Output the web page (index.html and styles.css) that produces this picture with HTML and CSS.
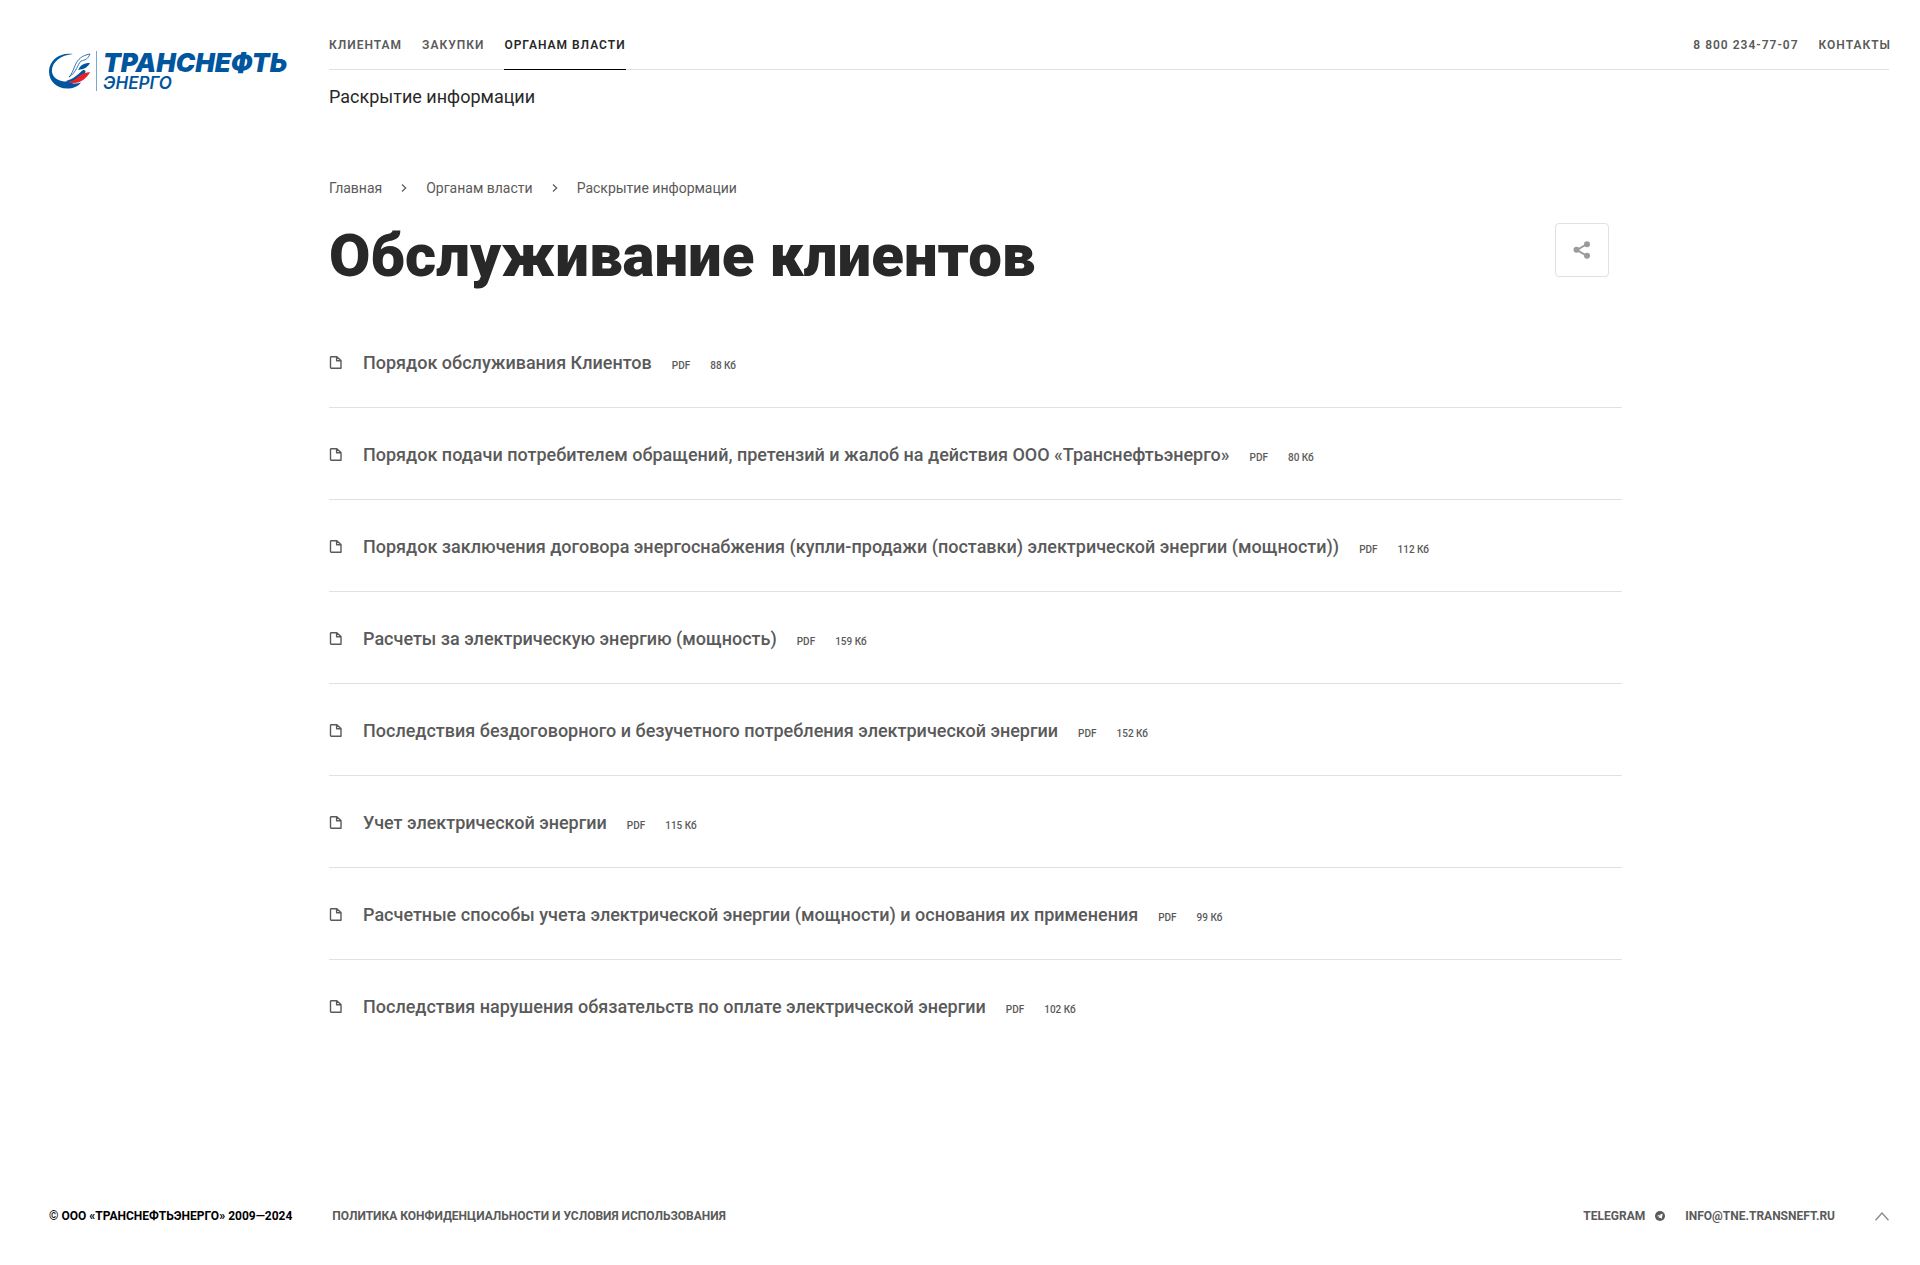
FILE: index.html
```html
<!DOCTYPE html>
<html lang="ru">
<head>
    <meta charset="UTF-8">
    <meta name="viewport" content="width=device-width, initial-scale=1.0">
    <title>Обслуживание клиентов</title>
    <link rel="stylesheet" href="styles.css">
</head>
<body>
    <svg class="sprite" width="0" height="0" aria-hidden="true">
        <symbol id="icon-file" viewBox="0 0 13 14">
            <path d="M2.200 1.700h5.600L12 5.500V13.300H2.200a.7.7 0 0 1-.7-.7V2.400a.7.7 0 0 1 .7-.7zM7.600 1.700v4H12" fill="none" stroke="currentColor" stroke-width="1.4" stroke-linejoin="round"/>
        </symbol>
        <symbol id="icon-chevron" viewBox="0 0 6 8">
            <path d="M1 .5L4.700 4 1 7.500" fill="none" stroke="currentColor" stroke-width="1.2"/>
        </symbol>
    </svg>

    <header class="header">
        <a href="#" class="logo" aria-label="Транснефть Энерго">
            <svg class="logo-mark" viewBox="0 0 42 36" aria-hidden="true">
                <path d="M24 1C10-1 0 8 0 18.500c0 10 8 17 18 17 6 0 11-2 14-6-5 2-9 1-13-1C12 29 4 26 3 19 2 10 11 2 24 1z" fill="#00559f"/>
                <path d="M20 24C27 17 24 4 41 1c-2 5-5 6-9 7-4 4-4 11-12 16z" fill="#fff" stroke="#00559f" stroke-width=".8"/>
                <path d="M41 10c-7 0-9 2-12 7 6-1 9-2 12-7z" fill="#00559f"/>
                <path d="M17 28c8-2 12-7 17-11 7 0-2 9-10 12-3 1-5 1-7-1z" fill="#00559f"/>
                <path d="M19 29c9-1 10-9 22-10-3 6-9 11-16 11-3 0-5 0-6-1z" fill="#e52329"/>
            </svg>
            <span class="logo-text">
                <span class="logo-name">ТРАНСНЕФТЬ</span>
                <span class="logo-sub">ЭНЕРГО</span>
            </span>
        </a>
        <div class="header-content">
            <div class="top-bar">
                <nav class="nav">
                    <a href="#">Клиентам</a>
                    <a href="#">Закупки</a>
                    <a href="#" class="active">Органам власти</a>
                </nav>
                <div class="nav nav-right">
                    <a href="tel:88002347707">8 800 234-77-07</a>
                    <a href="#">Контакты</a>
                </div>
            </div>
            <a href="#" class="sub-link">Раскрытие информации</a>
        </div>
    </header>

    <main class="main">
        <nav class="breadcrumbs">
            <a href="#">Главная</a>
            <svg><use href="#icon-chevron"/></svg>
            <a href="#">Органам власти</a>
            <svg><use href="#icon-chevron"/></svg>
            <a href="#">Раскрытие информации</a>
        </nav>

        <div class="title-row">
            <h1>Обслуживание клиентов</h1>
            <button type="button" class="share" aria-label="Поделиться">
                <svg viewBox="0 0 18 18" fill="currentColor">
                    <path d="M14 3L4 9l10 6" fill="none" stroke="currentColor" stroke-width="2"/>
                    <circle cx="3.500" cy="8.800" r="3"/>
                    <circle cx="14" cy="3.200" r="3"/>
                    <circle cx="14" cy="14.800" r="3"/>
                </svg>
            </button>
        </div>

        <ul class="docs">
            <li>
                <svg><use href="#icon-file"/></svg>
                <a href="#">Порядок обслуживания Клиентов</a>
                <span>PDF</span><span>88 Кб</span>
            </li>
            <li>
                <svg><use href="#icon-file"/></svg>
                <a href="#">Порядок подачи потребителем обращений, претензий и жалоб на действия ООО «Транснефтьэнерго»</a>
                <span>PDF</span><span>80 Кб</span>
            </li>
            <li>
                <svg><use href="#icon-file"/></svg>
                <a href="#">Порядок заключения договора энергоснабжения (купли-продажи (поставки) электрической энергии (мощности))</a>
                <span>PDF</span><span>112 Кб</span>
            </li>
            <li>
                <svg><use href="#icon-file"/></svg>
                <a href="#">Расчеты за электрическую энергию (мощность)</a>
                <span>PDF</span><span>159 Кб</span>
            </li>
            <li>
                <svg><use href="#icon-file"/></svg>
                <a href="#">Последствия бездоговорного и безучетного потребления электрической энергии</a>
                <span>PDF</span><span>152 Кб</span>
            </li>
            <li>
                <svg><use href="#icon-file"/></svg>
                <a href="#">Учет электрической энергии</a>
                <span>PDF</span><span>115 Кб</span>
            </li>
            <li>
                <svg><use href="#icon-file"/></svg>
                <a href="#">Расчетные способы учета электрической энергии (мощности) и основания их применения</a>
                <span>PDF</span><span>99 Кб</span>
            </li>
            <li>
                <svg><use href="#icon-file"/></svg>
                <a href="#">Последствия нарушения обязательств по оплате электрической энергии</a>
                <span>PDF</span><span>102 Кб</span>
            </li>
        </ul>
    </main>

    <footer class="footer">
        <span class="copyright">© ООО «Транснефтьэнерго» 2009—2024</span>
        <a href="#">Политика конфиденциальности и условия использования</a>
        <div class="footer-right">
            <a href="#" class="telegram">
                Telegram
                <svg viewBox="0 0 10 10">
                    <circle cx="5" cy="5" r="5" fill="currentColor"/>
                    <path d="M1.800 5l5.900-2.500-.9 5.200-2-1.300-.9.900-.2-1.600 2.700-2.300-3.300 2z" fill="#fff"/>
                </svg>
            </a>
            <a href="mailto:info@tne.transneft.ru">info@tne.transneft.ru</a>
            <button type="button" class="to-top" aria-label="Наверх">
                <svg viewBox="0 0 14 9"><path d="M.5 8.200L7 1l6.500 7.200" fill="none" stroke="currentColor" stroke-width="1.400"/></svg>
            </button>
        </div>
    </footer>
</body>
</html>
```
FILE: styles.css
```css
* {
    box-sizing: border-box;
}

body {
    margin: 0;
    min-height: 100vh;
    display: flex;
    flex-direction: column;
    font-family: Roboto, Arial, sans-serif;
    color: #282828;
    background-color: #fff;
}

a {
    color: inherit;
    text-decoration: none;
}

button {
    padding: 0;
    background: none;
    border: none;
    cursor: pointer;
}

.sprite {
    position: absolute;
}

/* header */
.header {
    display: grid;
    grid-template-columns: 280px 1fr;
    padding: 20px 31px 0 49px;
}

.logo {
    display: flex;
    align-items: center;
    height: 40px;
    margin-top: 31px;
    color: #00559f;
}

.logo-mark {
    width: 42px;
    height: 36px;
    margin-right: 5px;
}

.logo-text {
    display: flex;
    flex-direction: column;
    padding-left: 6px;
    border-left: 1px solid #7aa9d0;
    font-family: Inter, sans-serif;
    font-style: italic;
}

.logo-name {
    font-size: 26px;
    line-height: 24px;
    font-weight: 900;
}

.logo-sub {
    font-size: 17px;
    line-height: 16px;
    font-weight: 600;
}

.top-bar {
    display: flex;
    justify-content: space-between;
    height: 50px;
    border-bottom: 1px solid #e1e1e1;
}

.nav {
    display: flex;
    gap: 20px;
    font-size: 12px;
    line-height: 50px;
    font-weight: 600;
    letter-spacing: 1px;
    text-transform: uppercase;
    color: #5a5a5a;
}

.nav-right {
    margin-right: -2px;
}

.nav a {
    height: 50px;
}

.nav .active {
    color: #282828;
    border-bottom: 1px solid #000;
}

.sub-link {
    display: inline-block;
    margin-top: 16px;
    font-size: 18px;
    line-height: 22px;
}

/* content */
.main {
    flex: 1;
    padding: 68px 298px 0 329px;
}

.breadcrumbs {
    display: flex;
    align-items: center;
    gap: 19px;
    font-size: 14px;
    line-height: 24px;
    color: #5a5a5a;
}

.breadcrumbs svg {
    width: 6px;
    height: 8px;
}

.title-row {
    display: flex;
    justify-content: space-between;
    align-items: flex-start;
    margin-top: 23px;
    padding-right: 13px;
}

h1 {
    margin: 0;
    font-size: 60px;
    line-height: 66px;
    font-weight: 900;
}

.share {
    display: flex;
    align-items: center;
    justify-content: center;
    width: 54px;
    height: 54px;
    border: 1px solid #e1e1e1;
    border-radius: 4px;
    color: #9b9b9b;
}

.share svg {
    width: 18px;
    height: 18px;
}

.docs {
    margin: 27px 0 0;
    padding: 0;
    list-style: none;
    color: #5a5a5a;
}

.docs li {
    display: flex;
    align-items: baseline;
    height: 92px;
    padding-top: 34px;
    border-bottom: 1px solid #e1e1e1;
    line-height: 26px;
}

.docs li:last-child {
    border-bottom: none;
}

.docs svg {
    width: 13px;
    height: 14px;
    margin-right: 21px;
}

.docs a {
    font-size: 18px;
    font-weight: 500;
}

.docs span {
    margin-left: 20px;
    font-size: 10px;
    font-weight: 500;
}

/* footer */
.footer {
    display: flex;
    align-items: center;
    gap: 40px;
    padding: 0 31px 39px 49px;
    font-size: 12px;
    line-height: 20px;
    font-weight: 700;
    text-transform: uppercase;
    color: #5a5a5a;
}

.copyright {
    color: #000;
}

.footer-right {
    display: flex;
    align-items: center;
    gap: 20px;
    margin-left: auto;
}

.telegram {
    display: flex;
    align-items: center;
    gap: 10px;
}

.telegram svg {
    width: 10px;
    height: 10px;
}

.to-top {
    display: flex;
    margin-left: 20px;
    color: #8c8c8c;
}

.to-top svg {
    width: 14px;
    height: 9px;
}
```
